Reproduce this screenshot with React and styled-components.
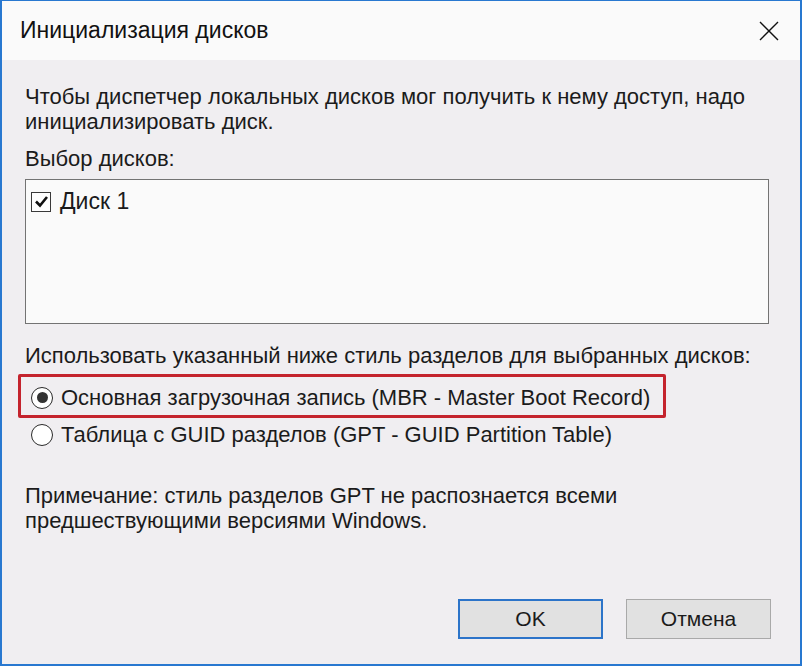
import React from 'react'
import styled, { createGlobalStyle } from 'styled-components'

const GlobalStyle = createGlobalStyle`
    html, body {
        margin: 0;
        padding: 0;
        background: #f0eef1;
    }
    body {
        font-family: "Liberation Sans", Arial, sans-serif;
        color: #1b1b1b;
    }
`

const Window = styled.div`
    width: 802px;
    height: 666px;
    box-sizing: border-box;
    border: 2px solid #2878d0;
    border-top-width: 1px;
    background: #f0eef1;
    display: flex;
    flex-direction: column;
`

const TitleBar = styled.div`
    height: 59px;
    background: #fafafa;
    display: flex;
    align-items: center;
    justify-content: space-between;
    padding: 0 19px 0 18px;
`

const Title = styled.div`
    font-size: 23px;
    color: #111;
`

const CloseButton = styled.div`
    width: 24px;
    height: 24px;
    display: flex;
    align-items: center;
    justify-content: center;
`

const Body = styled.div`
    flex: 1;
    display: flex;
    flex-direction: column;
    padding: 24px 31px 0 23px;
`

const Text = styled.div`
    font-size: 22px;
    line-height: 25px;
    margin-top: ${props => props.gap || 0}px;
`

const ListBox = styled.div`
    margin-top: 8px;
    height: 145px;
    box-sizing: border-box;
    background: #fafafa;
    border: 1px solid #737373;
    padding: 8px 5px;
`

const CheckRow = styled.label`
    display: flex;
    align-items: center;
    gap: 9px;
    font-size: 23px;
`

const CheckBox = styled.span`
    width: 18px;
    height: 18px;
    border: 1px solid #3a3a3a;
    background: #fff;
    display: flex;
    align-items: center;
    justify-content: center;
`

const RadioGroup = styled.div`
    margin-top: 11px;
    display: flex;
    flex-direction: column;
`

const RadioRow = styled.div`
    position: relative;
    align-self: flex-start;
    display: flex;
    align-items: center;
    gap: 8px;
    height: 37px;
    padding-left: 6px;
    font-size: 22px;
`

const Highlight = styled.span`
    position: absolute;
    top: -5px;
    bottom: -2px;
    left: -7px;
    right: -16px;
    border: 3px solid #c4232d;
    border-radius: 2px;
`

const Radio = styled.span`
    width: 20px;
    height: 20px;
    border-radius: 50%;
    border: 1px solid #2a2a2a;
    background: #fff;
    display: flex;
    align-items: center;
    justify-content: center;

    &::after {
        content: '';
        width: 11px;
        height: 11px;
        border-radius: 50%;
        background: ${props => (props.checked ? '#333' : 'transparent')};
    }
`

const Footer = styled.div`
    margin-top: auto;
    display: flex;
    justify-content: flex-end;
    gap: 23px;
    padding: 0 0 25px 0;
    margin-right: -2px;
`

const Button = styled.button`
    width: 145px;
    height: 40px;
    box-sizing: border-box;
    font-family: "Liberation Sans", Arial, sans-serif;
    font-size: 21px;
    color: #1b1b1b;
    background: #e1e1e1;
    border: ${props => (props.primary ? '2px solid #2c74c9' : '1px solid #a9a9a9')};
    padding: 0;
`

const App = () => (
    <>
        <GlobalStyle />
        <Window>
            <TitleBar>
                <Title>Инициализация дисков</Title>
                <CloseButton>
                    <svg width="20" height="20" viewBox="0 0 20 20">
                        <path d="M1 1 L19 19 M19 1 L1 19" stroke="#111" strokeWidth="1.4" fill="none" />
                    </svg>
                </CloseButton>
            </TitleBar>
            <Body>
                <Text>
                    Чтобы диспетчер локальных дисков мог получить к нему доступ, надо
                    <br />
                    инициализировать диск.
                </Text>
                <Text gap={12}>Выбор дисков:</Text>
                <ListBox>
                    <CheckRow>
                        <CheckBox>
                            <svg width="15" height="15" viewBox="0 0 15 15">
                                <path d="M2 7.5 L6 11.5 L13 3" stroke="#111" strokeWidth="2.6" fill="none" />
                            </svg>
                        </CheckBox>
                        Диск 1
                    </CheckRow>
                </ListBox>
                <Text gap={19}>Использовать указанный ниже стиль разделов для выбранных дисков:</Text>
                <RadioGroup>
                    <RadioRow>
                        <Highlight />
                        <Radio checked />
                        Основная загрузочная запись (MBR - Master Boot Record)
                    </RadioRow>
                    <RadioRow>
                        <Radio />
                        Таблица с GUID разделов (GPT - GUID Partition Table)
                    </RadioRow>
                </RadioGroup>
                <Text gap={30}>
                    Примечание: стиль разделов GPT не распознается всеми
                    <br />
                    предшествующими версиями Windows.
                </Text>
                <Footer>
                    <Button primary>OK</Button>
                    <Button>Отмена</Button>
                </Footer>
            </Body>
        </Window>
    </>
)

export default App
